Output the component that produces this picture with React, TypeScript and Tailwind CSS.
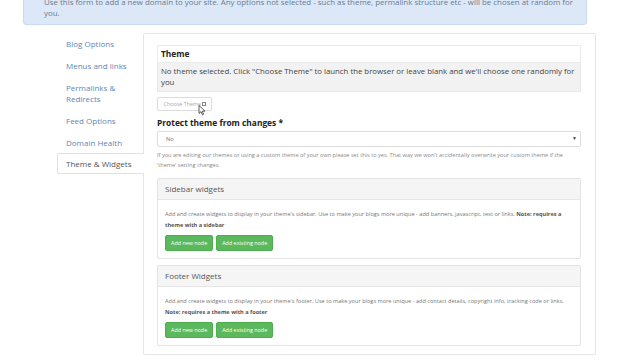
import React from 'react';

const navItems = [
  { label: 'Blog Options', lines: 1 },
  { label: 'Menus and links', lines: 1 },
  { label: 'Permalinks & Redirects', lines: 2 },
  { label: 'Feed Options', lines: 1 },
  { label: 'Domain Health', lines: 1 },
];

function WidgetPanel({ title, children }: { title: string; children: React.ReactNode }) {
  return (
    <div className="border border-[#e3e3e3] rounded-[2px] bg-white">
      <div className="h-[21px] bg-[#f5f5f5] border-b border-[#e6e6e6] px-[7px] flex items-center text-[8px] text-[#555]">
        {title}
      </div>
      <div className="px-[7px] pt-[9px] pb-[7px]">
        <p className="text-[5.6px] leading-[11px] text-[#777]">{children}</p>
        <div className="flex gap-[3px] mt-[4px]">
          <button className="h-[16px] px-[5px] bg-[#5cb85c] border border-[#4cae4c] rounded-[2px] text-white text-[5.4px]">
            Add new node
          </button>
          <button className="h-[16px] px-[5px] bg-[#5cb85c] border border-[#4cae4c] rounded-[2px] text-white text-[5.4px]">
            Add existing node
          </button>
        </div>
      </div>
    </div>
  );
}

export default function App() {
  return (
    <div className="w-[640px] h-[360px] overflow-hidden bg-white font-['Open_Sans',sans-serif] relative">
      {/* Info alert */}
      <div className="mx-[23px] w-[564px] mt-[-10px] h-[35px] bg-[#dce8f8] border border-[#c9dbf2] rounded-[3px] pl-[20px] pr-[8px] pt-[6px] text-[7.9px] leading-[11px] text-[#6a7c90]">
        Use this form to add a new domain to your site. Any options not selected - such as theme, permalink structure etc - will be chosen at random for you.
      </div>

      <div className="flex ml-[57px] mt-[8px]">
        {/* Side nav */}
        <div className="w-[86px] mt-[-1px]">
          {navItems.map((item) => (
            <div
              key={item.label}
              className={`pl-[9px] text-[8px] leading-[11px] text-[#5b87b8] py-[5.5px] ${item.lines === 2 ? 'pr-[24px]' : ''}`}
            >
              {item.label}
            </div>
          ))}
          <div className="relative z-10 h-[21px] bg-white border border-r-0 border-[#e2e2e2] rounded-l-[2px] pl-[8px] flex items-center text-[8px] text-[#555] w-[87px]">
            Theme &amp; Widgets
          </div>
        </div>

        {/* Main panel */}
        <div className="w-[453px] h-[322px] border border-[#e5e5e5] rounded-[2px] pl-[13px] pr-[14px] pt-[11px]">
          <div className="border border-[#ececec] h-[18px] flex items-center pl-[3px] text-[8.4px] font-bold text-[#222]">
            Theme
          </div>
          <div className="bg-[#f2f2f2] border border-t-0 border-[#e8e8e8] h-[29px] px-[3px] pt-[3px] text-[7.8px] leading-[11px] text-[#444]">
            No theme selected. Click "Choose Theme" to launch the browser or leave blank and we'll choose one randomly for you
          </div>
          <div className="relative mt-[5px] h-[14px]">
            <button className="h-[14px] w-[55px] border border-[#dcdcdc] rounded-[2px] text-[5.4px] text-[#aaa] flex items-center justify-center">
              Choose Theme
              <span className="inline-block w-[4px] h-[4px] border border-[#888] ml-[0.5px]" />
            </button>
            <svg className="absolute left-[41px] top-[8px]" width="8" height="11" viewBox="0 0 8 11">
              <path d="M1 0.5 L1 8.5 L3 6.6 L4.4 9.8 L5.6 9.3 L4.3 6.2 L7 6.2 Z" fill="#fff" stroke="#333" strokeWidth="0.8" />
            </svg>
          </div>
          <div className="mt-[6px] text-[8.4px] font-bold text-[#222] leading-[11px]">
            Protect theme from changes *
          </div>
          <div className="mt-[3px] h-[16px] border border-[#dcdcdc] rounded-[2px] flex items-center justify-between pl-[8px] pr-[3px] text-[5.8px] text-[#777]">
            <span>No</span>
            <span className="text-[5px] text-[#444]">▼</span>
          </div>
          <p className="mt-[3px] text-[5.6px] leading-[10px] text-[#888]">
            If you are editing our themes or using a custom theme of your own please set this to yes. That way we won't accidentally overwrite your custom theme if the 'theme' setting changes.
          </p>
          <div className="mt-[8px] flex flex-col gap-[6px]">
            <WidgetPanel title="Sidebar widgets">
              Add and create widgets to display in your theme's sidebar. Use to make your blogs more unique - add banners, javascript, text or links. <b className="text-[#555]">Note: requires a theme with a sidebar</b>
            </WidgetPanel>
            <WidgetPanel title="Footer Widgets">
              Add and create widgets to display in your theme's footer. Use to make your blogs more unique - add contact details, copyright info, tracking code or links. <b className="text-[#555]">Note: requires a theme with a footer</b>
            </WidgetPanel>
          </div>
        </div>
      </div>
    </div>
  );
}
